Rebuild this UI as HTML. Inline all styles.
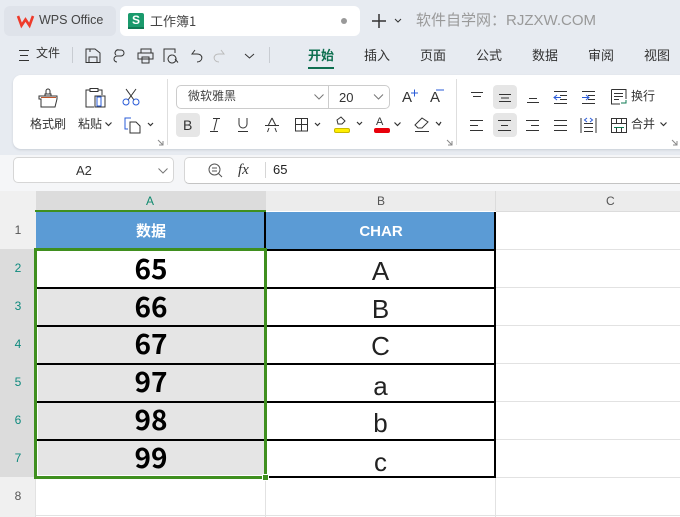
<!DOCTYPE html>
<html><head><meta charset="utf-8">
<style>
*{box-sizing:border-box;margin:0;padding:0}
html,body{width:680px;height:517px;overflow:hidden;background:#fff}
body{position:relative;font-family:"Liberation Sans","Noto Sans CJK SC",sans-serif;color:#333}
.a{position:absolute}
.t{position:absolute;white-space:nowrap;line-height:1}
svg{position:absolute;overflow:visible}
svg *{fill:none;stroke:#333;stroke-width:1}
.rh{position:absolute;left:0;width:36px;height:38px;background:#dcdcdc;color:#0f8a7e;font-size:12px;text-align:center;line-height:38px}
.n{position:absolute;left:38px;width:226px;text-align:center;font:bold 28px/36px "Noto Sans CJK SC",sans-serif;color:#000;background:#e5e5e5;height:36px}
.c{position:absolute;left:267px;width:227px;text-align:center;font:400 26px/36px "Liberation Sans",sans-serif;color:#222;height:36px}
.h{position:absolute;height:2px;background:#000}
.g{position:absolute;background:#e2e2e2}
.sel{position:absolute;background:#e6e6e6;border-radius:4px;width:24px;height:24px}
.menu{font-size:13px;color:#333;top:48px;font-family:"Noto Sans CJK SC",sans-serif}
</style></head><body>
<div class="a" style="left:0;top:0;width:680px;height:157px;background:#e7ebf1"></div>
<div class="a" style="left:0;top:155px;width:680px;height:36px;background:#f5f6f8"></div>

<!-- tabs -->
<div class="a" style="left:4px;top:6px;width:112px;height:30px;background:#dfe3ea;border-radius:6px"></div>
<svg style="left:17px;top:15px" width="17" height="12" viewBox="0 0 17 12"><path d="M1 1L4.500 10.500L8.500 4.500L12.500 10.500L16 1" style="stroke:#ee3b2b;stroke-width:2.600"/></svg>
<div class="t" style="left:39px;top:14px;font-size:12.500px;color:#444">WPS Office</div>
<div class="a" style="left:120px;top:6px;width:240px;height:30px;background:#fff;border-radius:6px"></div>
<div class="a" style="left:128px;top:13px;width:16px;height:16px;background:#1a9a6c;border-radius:2px;color:#fff;font:bold 12px/15px 'Liberation Sans';text-align:center">S</div>
<div class="a" style="left:128px;top:27px;width:16px;height:2px;background:#0f7a54"></div>
<div class="t" style="left:150px;top:14px;font:13px/1 'Noto Sans CJK SC',sans-serif;color:#444">工作簿1</div>
<div class="a" style="left:341px;top:18px;width:6px;height:6px;border-radius:50%;background:#999"></div>
<svg style="left:372px;top:14px" width="30" height="14"><path d="M0 7H14M7 0V14" style="stroke-width:1.500"/><path d="M23 5L26 8L29 5"/></svg>
<div class="t" style="left:416px;top:13px;font:15px/1 'Liberation Sans','Noto Sans CJK SC',sans-serif;color:#999">软件自学网：RJZXW.COM</div>

<!-- menu row -->
<svg style="left:19px;top:50px" width="10" height="11"><path d="M0 .5H10M1 5.500H9M0 10.500H10"/></svg>
<div class="t menu" style="left:36px;top:47px;font-size:12px">文件</div>
<div class="a" style="left:72px;top:47px;width:1px;height:16px;background:#c8ccd2"></div>
<svg style="left:85px;top:47px" width="170" height="18" viewBox="0 0 170 18">
<path d="M1 2H10L15 6V15.500H1ZM4 15V10H12V15M5 2V5"/>
<path d="M31 9H36A3 3 0 0 0 36 3H34A3 3 0 0 0 31 8M35 9H32A3 3 0 0 0 32 15"/>
<path d="M56 6V2H66V6M53 6H68V12H53ZM57 10H64V16H57Z"/>
<path d="M79 15V2H90V6M87 8A4 4 0 1 0 87.100 8M90 12L93 15.500"/>
<path d="M110 3L107 7H112C119 7 118 15 112 15"/>
<path d="M136 3L139 7H134C127 7 128 15 134 15" style="stroke:#bbb"/>
<path d="M160 7L164.500 11L169 7"/>
</svg>
<div class="a" style="left:269px;top:47px;width:1px;height:16px;background:#c8ccd2"></div>
<div class="t menu" style="left:308px;font-weight:700;color:#0e6f50">开始</div>
<div class="a" style="left:308px;top:67px;width:26px;height:2px;background:#0e6f50"></div>
<div class="t menu" style="left:364px">插入</div>
<div class="t menu" style="left:420px">页面</div>
<div class="t menu" style="left:476px">公式</div>
<div class="t menu" style="left:532px">数据</div>
<div class="t menu" style="left:588px">审阅</div>
<div class="t menu" style="left:644px">视图</div>

<!-- ribbon -->
<div class="a" style="left:13px;top:75px;width:680px;height:74px;background:#fff;border-radius:8px;box-shadow:0 1px 2px #c9ced6"></div>
<svg style="left:38px;top:87px" width="22" height="22" viewBox="0 0 22 22"><path d="M1 9H19V12L17 20H3L3 12L1 12ZM7 9V7H13V9M8 7V4A2 2 0 0 1 12 4V7"/><path d="M3 10.500H18" style="stroke:#c0562c"/></svg>
<div class="t" style="left:30px;top:118px;font:12px/1 'Noto Sans CJK SC',sans-serif">格式刷</div>
<svg style="left:84px;top:87px" width="22" height="22" viewBox="0 0 22 22"><path d="M6 3H2V20H10M14 3H18V8M6 4.500H14V1.500H6Z"/><path d="M11 9H21V20H11Z"/><path d="M13 10V19H17V10Z" style="stroke:#2a5bd7"/></svg>
<div class="t" style="left:78px;top:118px;font:12px/1 'Noto Sans CJK SC',sans-serif">粘贴</div>
<svg style="left:105px;top:122px" width="7" height="4"><path d="M.5 .5L3.500 3.500L6.500 .5" style="stroke-width:1.200"/></svg>
<svg style="left:122px;top:88px" width="18" height="18" viewBox="0 0 18 18"><path d="M4 1L12 12M14 1L6 12"/><circle cx="4" cy="14" r="3" style="stroke:#2a5bd7"/><circle cx="14" cy="14" r="3" style="stroke:#2a5bd7"/></svg>
<svg style="left:125px;top:117px" width="28" height="16" viewBox="0 0 28 16"><path d="M6 1H0V12H3" style="stroke:#2a5bd7"/><path d="M5 5H11L15 9V16H5Z"/><path d="M23 6L25.500 8.500L28 6" style="stroke-width:1.200"/></svg>
<svg style="left:158px;top:140px" width="6" height="6"><path d="M0 0L5 5M5 1V5H1" style="stroke:#888"/></svg>
<div class="a" style="left:167px;top:79px;width:1px;height:66px;background:#dedede"></div>

<div class="a" style="left:176px;top:85px;width:214px;height:24px;border:1px solid #ccc;border-radius:5px"></div>
<div class="a" style="left:328px;top:85px;width:1px;height:24px;background:#ccc"></div>
<div class="t" style="left:188px;top:90px;font:12px/1 'Noto Sans CJK SC',sans-serif;color:#444">微软雅黑</div>
<svg style="left:314px;top:94px" width="70" height="6"><path d="M.5 .5L5 5L9.500 .5M60 .5L64.500 5L69 .5" style="stroke:#777"/></svg>
<div class="t" style="left:339px;top:91px;font-size:13px">20</div>
<div class="t" style="left:402px;top:90px;font-size:15px">A</div>
<svg style="left:411px;top:89px" width="36" height="8"><path d="M0 4H7M3.500 .5V7.500M25 1H33" style="stroke:#2a5bd7"/></svg>
<div class="t" style="left:430px;top:90px;font-size:15px">A</div>

<div class="sel" style="left:176px;top:113px"></div>
<div class="t" style="left:183px;top:118px;font-size:14px;color:#333">B</div>
<svg style="left:210px;top:118px" width="12" height="15"><path d="M3 .5H10M7 .5L4 12.500M0 13.500H8"/></svg>
<svg style="left:238px;top:118px" width="10" height="15"><path d="M1 0V6A4 4 0 0 0 9 6V0M0 13.500H10"/></svg>
<svg style="left:265px;top:118px" width="14" height="15"><path d="M7 0L3 8M7 0L11 8M0 7.500H14M4 10L2.500 14M10 10L11.500 14"/></svg>
<svg style="left:295px;top:118px" width="28" height="14"><path d="M.5 .5H12.500V13H.5ZM6.500 .5V13M.5 6.500H12.500"/><path d="M20 5L22.500 7.500L25 5" style="stroke-width:1.200"/></svg>
<svg style="left:334px;top:117px" width="30" height="12"><path d="M3 3L7 0L11 4L8 7H4Z"/><path d="M23 5L25.500 7.500L28 5" style="stroke-width:1.200"/></svg>
<div class="a" style="left:334px;top:128px;width:16px;height:5px;background:#ffee00;border:1px solid #c8b800;border-radius:2px"></div>
<div class="t" style="left:376px;top:117px;font-size:11px">A</div>
<div class="a" style="left:374px;top:128px;width:16px;height:5px;background:#e8000b;border-radius:2px"></div>
<svg style="left:394px;top:122px" width="8" height="5"><path d="M.5 .5L3.500 3.500L6.500 .5" style="stroke-width:1.200"/></svg>
<svg style="left:414px;top:117px" width="30" height="16"><path d="M1 8L8 1L14 5L8 11H4ZM1 14.500H15"/><path d="M22 5L25 8L27 5" style="stroke-width:1.200"/></svg>
<svg style="left:447px;top:140px" width="6" height="6"><path d="M0 0L5 5M5 1V5H1" style="stroke:#888"/></svg>
<div class="a" style="left:456px;top:79px;width:1px;height:66px;background:#dedede"></div>

<div class="sel" style="left:493px;top:85px"></div>
<div class="sel" style="left:493px;top:113px"></div>
<svg style="left:470px;top:90px" width="130" height="16" viewBox="0 0 130 16">
<path d="M1 2.500H13M3 6.500H11"/>
<path d="M29 4.500H41M31 8H39M29 11.500H41"/>
<path d="M59 8.500H67M57 12.500H69"/>
<path d="M84 1.500H97M90 5.500H97M90 9.500H97M84 13.500H97"/><path d="M91 7.500H84M87 5L84 7.500L87 10" style="stroke:#2a5bd7"/>
<path d="M112 1.500H125M118 5.500H125M118 9.500H125M112 13.500H125"/><path d="M112 7.500H119M116 5L119 7.500L116 10" style="stroke:#2a5bd7"/>
</svg>
<svg style="left:470px;top:118px" width="130" height="16" viewBox="0 0 130 16">
<path d="M0 2.500H13M0 7.500H8M0 12.500H13"/>
<path d="M28 2.500H41M31 7.500H38M28 12.500H41"/>
<path d="M56 2.500H69M61 7.500H69M56 12.500H69"/>
<path d="M84 2.500H97M84 7.500H97M84 12.500H97"/>
<path d="M111 0V15M126 0V15M114 9.500H123M114 13.500H123M114 5.500H123"/><path d="M117 0L114.500 2L117 4M120 0L122.500 2L120 4" style="stroke:#2a5bd7"/>
</svg>
<svg style="left:611px;top:89px" width="16" height="16"><path d="M.5 .5H15V10M.5 .5V15H9M3 4.500H12M3 7.500H12M3 10.500H8"/><path d="M15 11V14H10" style="stroke:#0e7a50"/></svg>
<div class="t" style="left:631px;top:90px;font:12px/1 'Noto Sans CJK SC',sans-serif">换行</div>
<svg style="left:611px;top:118px" width="16" height="15"><path d="M.5 .5H15.500V14.500H.5ZM.5 5.500H15.500M5.500 .5V5.500M10.500 .5V5.500M5.500 10V14.500M10.500 10V14.500"/><path d="M3 9.500H13" style="stroke:#0e7a50"/></svg>
<div class="t" style="left:631px;top:118px;font:12px/1 'Noto Sans CJK SC',sans-serif">合并</div>
<svg style="left:660px;top:122px" width="8" height="5"><path d="M.5 .5L3.500 3.500L6.500 .5" style="stroke-width:1.200"/></svg>
<svg style="left:672px;top:140px" width="6" height="6"><path d="M0 0L5 5M5 1V5H1" style="stroke:#888"/></svg>

<!-- formula bar -->
<div class="a" style="left:13px;top:157px;width:161px;height:26px;background:#fff;border:1px solid #d6d6d6;border-radius:5px"></div>
<div class="t" style="left:76px;top:164px;font-size:13px;color:#333">A2</div>
<svg style="left:158px;top:168px" width="10" height="6"><path d="M.5 .5L5 5L9.500 .5" style="stroke:#777"/></svg>
<div class="a" style="left:184px;top:157px;width:510px;height:27px;background:#fff;border:1px solid #d6d6d6;border-bottom-color:#c4c4c4;border-radius:5px"></div>
<svg style="left:208px;top:163px" width="15" height="15"><circle cx="6.500" cy="6.500" r="5.500" style="stroke:#555"/><path d="M4 5H9M4 8H9M10.500 10.500L14 14" style="stroke:#555"/></svg>
<div class="t" style="left:238px;top:163px;font:italic 15px/1 'Liberation Serif';color:#333">fx</div>
<div class="a" style="left:265px;top:162px;width:1px;height:16px;background:#d6d6d6"></div>
<div class="t" style="left:273px;top:163px;font-size:13px;color:#222">65</div>

<!-- column headers -->
<div class="a" style="left:36px;top:191px;width:644px;height:20px;background:#ececec"></div>
<div class="a" style="left:36px;top:191px;width:230px;height:20px;background:#dcdcdc"></div>
<div class="a" style="left:495px;top:191px;width:1px;height:20px;background:#dcdcdc"></div>
<div class="a" style="left:496px;top:211px;width:184px;height:1px;background:#dcdcdc"></div>
<svg style="left:15px;top:198px" width="8" height="8"><path d="M7 0V7H0Z" style="fill:#666;stroke:none"/></svg>
<div class="t" style="left:146px;top:195px;font-size:12px;color:#0f8a6e">A</div>
<div class="t" style="left:377px;top:195px;font-size:12px;color:#555">B</div>
<div class="t" style="left:606px;top:195px;font-size:12px;color:#555">C</div>

<!-- row headers -->
<div class="a" style="left:0;top:191px;width:36px;height:326px;background:#f0f0f0"></div>
<div class="rh" style="top:211px;background:#f0f0f0;color:#555">1</div>
<div class="rh" style="top:249px">2</div>
<div class="rh" style="top:287px">3</div>
<div class="rh" style="top:325px">4</div>
<div class="rh" style="top:363px">5</div>
<div class="rh" style="top:401px">6</div>
<div class="rh" style="top:439px">7</div>
<div class="rh" style="top:477px;background:#f0f0f0;color:#555">8</div>

<!-- grid -->
<div class="g" style="left:496px;top:249px;width:184px;height:1px"></div>
<div class="g" style="left:496px;top:287px;width:184px;height:1px"></div>
<div class="g" style="left:496px;top:325px;width:184px;height:1px"></div>
<div class="g" style="left:496px;top:363px;width:184px;height:1px"></div>
<div class="g" style="left:496px;top:401px;width:184px;height:1px"></div>
<div class="g" style="left:496px;top:439px;width:184px;height:1px"></div>
<div class="g" style="left:36px;top:515px;width:644px;height:1px"></div>
<div class="g" style="left:35px;top:477px;width:1px;height:40px"></div>
<div class="g" style="left:265px;top:477px;width:1px;height:40px"></div>
<div class="g" style="left:495px;top:477px;width:1px;height:40px"></div>
<div class="g" style="left:496px;top:477px;width:184px;height:1px"></div>

<!-- table -->
<div class="a" style="left:36px;top:212px;width:460px;height:37px;background:#5b9bd5"></div>
<div class="t" style="left:36px;width:230px;top:223px;text-align:center;font:700 15px/1 'Noto Sans CJK SC',sans-serif;color:#fff">数据</div>
<div class="t" style="left:266px;width:230px;top:224px;text-align:center;font:700 15px/1 'Liberation Sans',sans-serif;color:#fff">CHAR</div>

<div class="a" style="left:37px;top:251px;width:228px;height:225px;background:#fff"></div>
<div class="n" style="top:250px;background:transparent">65</div>
<div class="n" style="top:289px;height:36px;line-height:35px">66</div>
<div class="n" style="top:327px;height:36px;line-height:33px">67</div>
<div class="n" style="top:365px;height:36px;line-height:33px">97</div>
<div class="n" style="top:403px;height:36px;line-height:33px">98</div>
<div class="n" style="top:441px;height:34px;line-height:33px">99</div>

<div class="c" style="top:253px">A</div>
<div class="c" style="top:291px">B</div>
<div class="c" style="top:328px">C</div>
<div class="c" style="top:368px">a</div>
<div class="c" style="top:405px">b</div>
<div class="c" style="top:444px">c</div>

<div class="h" style="left:37px;top:287px;width:459px"></div>
<div class="h" style="left:37px;top:325px;width:459px"></div>
<div class="h" style="left:37px;top:363px;width:459px"></div>
<div class="h" style="left:37px;top:401px;width:459px"></div>
<div class="h" style="left:37px;top:439px;width:459px"></div>
<div class="h" style="left:266px;top:249px;width:230px"></div>
<div class="h" style="left:266px;top:476px;width:230px"></div>
<div class="a" style="left:264px;top:212px;width:2px;height:37px;background:#000"></div>
<div class="a" style="left:494px;top:212px;width:2px;height:266px;background:#000"></div>

<!-- selection -->
<div class="a" style="left:35px;top:210px;width:231px;height:2px;background:#3f8f1f"></div>
<div class="a" style="left:34px;top:248px;width:233px;height:231px;border:3px solid #3f8f1f"></div>
<div class="a" style="left:263px;top:475px;width:5px;height:5px;background:#3f8f1f;outline:1px solid #fff"></div>
</body></html>
